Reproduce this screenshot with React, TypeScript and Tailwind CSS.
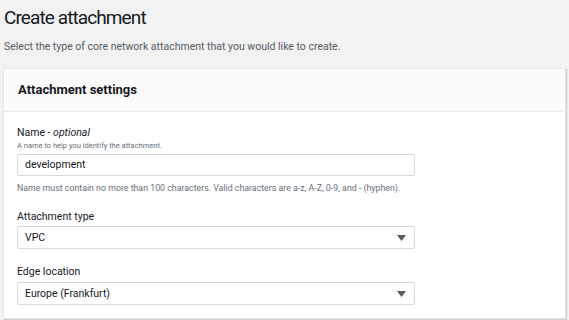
import React from "react";

function Caret() {
  return (
    <svg width="9" height="6" viewBox="0 0 9 6" className="shrink-0">
      <path d="M0 0 H9 L4.5 6 Z" fill="#545b64" />
    </svg>
  );
}

function Select({ value }: { value: string }) {
  return (
    <div className="flex h-[23px] w-[398px] items-center justify-between rounded-[2px] border border-[#d5dbdb] bg-white pl-[7px] pr-[8px] text-[10.5px] text-[#16191f]">
      <span>{value}</span>
      <Caret />
    </div>
  );
}

export default function App() {
  return (
    <div
      className="h-[320px] w-[569px] overflow-hidden bg-[#f2f2f2] text-[#16191f]"
      style={{ fontFamily: 'Roboto, "Noto Sans", sans-serif' }}
    >
      <div className="px-[4px] pt-[3px]">
        <h1 className="text-[19px] leading-[30px] font-normal tracking-[-0.9px]">Create attachment</h1>
        <p className="mt-[7px] text-[10.5px] leading-[14px] text-[#545b64]">
          Select the type of core network attachment that you would like to create.
        </p>
      </div>
      <div className="ml-[3px] mt-[14px] w-[563px] border border-[#e6e6e6] bg-white shadow-[1px_1px_1px_rgba(0,0,0,0.15)]">
        <div className="flex h-[43px] items-center border-b border-[#eaeded] bg-[#fbfbfb] px-[14px]">
          <h2 className="text-[13px] font-bold">Attachment settings</h2>
        </div>
        <div className="px-[13px] pb-[13px] pt-[13px]">
          <div className="text-[10.5px] leading-[15px]">
            Name - <i>optional</i>
          </div>
          <div className="text-[7.5px] leading-[11px] text-[#687078]">
            A name to help you identify the attachment.
          </div>
          <div className="mt-[3px] flex h-[22px] w-[398px] items-center rounded-[2px] border border-[#d5dbdb] bg-white pl-[7px] text-[10.5px]">
            development
          </div>
          <div className="mt-[6px] text-[8.8px] leading-[12px] text-[#687078]">
            Name must contain no more than 100 characters. Valid characters are a-z, A-Z, 0-9, and - (hyphen).
          </div>
          <div className="mt-[15px] text-[10.5px] leading-[15px]">Attachment type</div>
          <div className="mt-[2px]">
            <Select value="VPC" />
          </div>
          <div className="mt-[15px] text-[10.5px] leading-[15px]">Edge location</div>
          <div className="mt-[3px]">
            <Select value="Europe (Frankfurt)" />
          </div>
        </div>
      </div>
    </div>
  );
}
